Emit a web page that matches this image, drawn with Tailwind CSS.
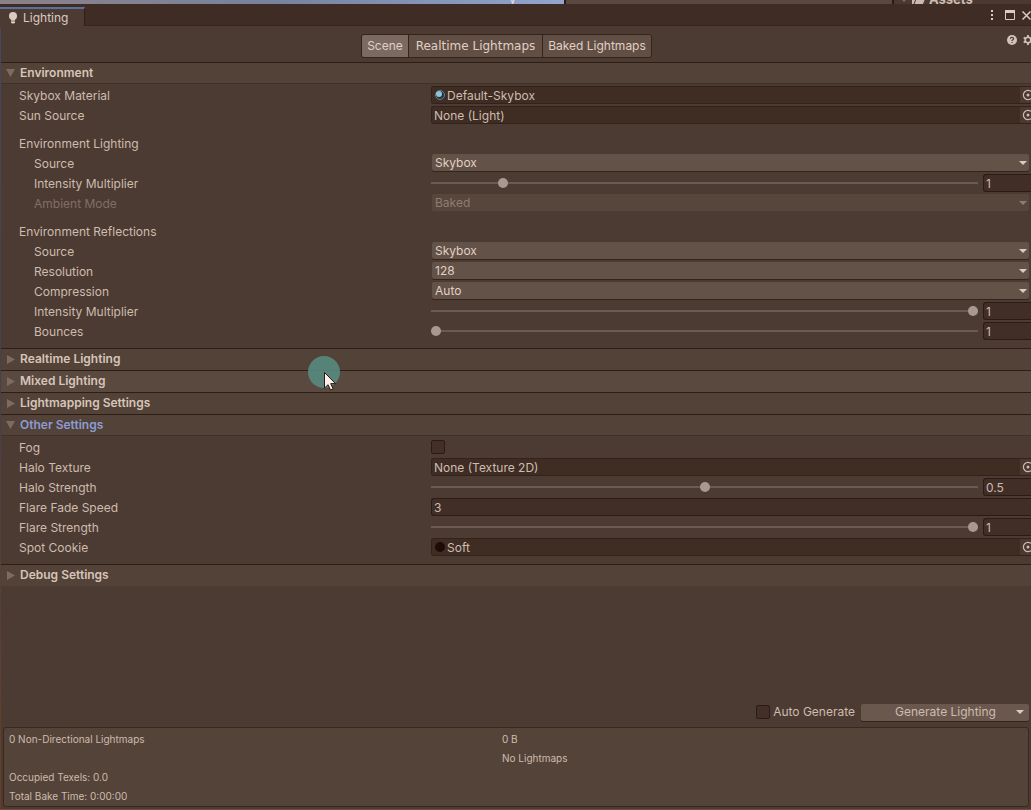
<!DOCTYPE html>
<html lang="en">
<head>
<meta charset="utf-8">
<meta name="viewport" content="width=device-width, initial-scale=1">
<title>Lighting</title>
<script src="https://cdn.jsdelivr.net/npm/@tailwindcss/browser@4"></script>
</head>
<body class="bg-[#4c3b32] text-[#cdbcb0] font-['Inter',sans-serif] text-xs">
<svg class="hidden">
  <symbol id="down" viewBox="0 0 8 4"><path d="M0 0h8L4 4z" fill="currentColor"/></symbol>
  <symbol id="open" viewBox="0 0 9 9"><path d="M0 0h9L4.500 8z" fill="currentColor"/></symbol>
  <symbol id="closed" viewBox="0 0 9 9"><path d="M1 0v9l8-4.500z" fill="currentColor"/></symbol>
  <symbol id="pick" viewBox="0 0 12 12"><circle cx="6" cy="6" r="4.600" fill="none" stroke="currentColor" stroke-width="1.200"/><circle cx="6" cy="6" r="1.500" fill="currentColor"/></symbol>
</svg>
<div class="relative flex min-h-screen flex-col overflow-hidden border-b border-[#6a5043]">

  <!-- Strip of the windows behind -->
  <div class="flex h-1 items-end overflow-hidden bg-[#57463c] leading-[10px]" aria-hidden="true">
    <div class="flex h-full w-[564px] items-end justify-end bg-linear-to-r from-[#8b8086] via-[#77839f] to-[#92a5cf] pr-12 text-[#e4dfe6]">y</div>
    <div class="h-full w-[328px] border-l-2 border-[#2a1a14] bg-[#594840]"></div>
    <div class="flex h-full flex-1 items-end gap-1 border-l-2 border-[#2a1a14] bg-[#4a3930] pl-[6px]">
      <svg class="size-2 text-[#7b695f]"><use href="#down"/></svg>
      <svg class="h-[9px] w-[13px]" viewBox="0 0 13 9"><path d="M0 0h12v4h1l-2 5H0z" fill="#cbbab0"/><path d="M2 9l2-5h8" fill="none" stroke="#4a3930"/></svg>
      <span class="text-[13px] font-bold">Assets</span>
    </div>
  </div>

  <!-- Tab bar -->
  <header class="flex h-[22px] items-end bg-[#3f2c24] shadow-[inset_0_-1px_#35231c]">
    <button class="flex h-[19px] w-[85px] items-center gap-[6px] border-t-2 border-r border-t-[#56719c] border-r-[#2f1f18] bg-[#4c3b32] pl-[9px] text-[#dccbc0]">
      <svg class="h-3 w-2" viewBox="0 0 8 12"><circle cx="4" cy="4" r="4" fill="#dccbc0"/><path d="M2 7h4v3.500l-1 1H3l-1-1z" fill="#dccbc0"/><path d="M2 9h4" stroke="#4c3b32" stroke-width=".6"/></svg>
      Lighting
    </button>
    <div class="ml-auto flex h-full items-center gap-3 text-[#dccbc0]">
      <button aria-label="Menu"><svg class="block h-[10px] w-[2px]" viewBox="0 0 2 10" fill="currentColor"><path d="M0 0h2v2H0zM0 4h2v2H0zM0 8h2v2H0z"/></svg></button>
      <button aria-label="Maximize"><svg class="block size-[10px]" viewBox="0 0 10 10"><path d="M.5.500h9v9h-9z" fill="none" stroke="currentColor"/><path d="M0 0h10v3H0z" fill="currentColor"/></svg></button>
      <button aria-label="Close" class="-ml-[5px]"><svg class="block h-[9px] w-[9px]" viewBox="0 0 9 9"><path d="M.5.500l8 8M8.500.500l-8 8" stroke="currentColor" stroke-width="1.500"/></svg></button>
    </div>
  </header>

  <!-- Mode toolbar -->
  <div class="grid h-9 grid-cols-[1fr_auto_1fr] items-start">
    <nav class="col-start-2 mr-[18px] mt-2 flex h-6 overflow-hidden rounded-[3px] border border-[#352319] text-[#e0cfc4]">
      <button class="w-[47px] border-r border-[#352319] bg-[#7b6a61]">Scene</button>
      <button class="w-[134px] border-r border-[#352319] bg-[#614f46] font-['DejaVu_Sans',sans-serif]">Realtime Lightmaps</button>
      <button class="w-[108px] bg-[#614f46]">Baked Lightmaps</button>
    </nav>
    <div class="flex justify-end gap-[6px] overflow-hidden pt-[9px] text-[#d3c2b7]">
      <button aria-label="Help"><svg class="block size-[10px]" viewBox="0 0 10 10"><circle cx="5" cy="5" r="5" fill="currentColor"/><path d="M3.400 3.800C3.400 1.800 6.600 1.800 6.600 3.700 6.600 4.800 5 4.800 5 6" fill="none" stroke="#4c3b32" stroke-width="1.200"/><path d="M4.400 6.900h1.200v1.200H4.400z" fill="#4c3b32"/></svg></button>
      <button aria-label="Settings" class="w-2 overflow-hidden"><svg class="block h-[10px] w-[10px]" viewBox="0 0 10 10"><circle cx="5" cy="5" r="2.800" fill="none" stroke="currentColor" stroke-width="1.600"/><path d="M5 0v2M5 8v2M.7 2.500l1.600 1M7.700 6.500l1.600 1M.7 7.500l1.600-1M7.700 3.500l1.600-1" stroke="currentColor" stroke-width="1.800"/></svg></button>
    </div>
  </div>

  <section>
    <h2><button aria-expanded="true" class="flex h-[22px] w-full items-center gap-[5px] border-y border-t-[#2e1d16] border-b-[#41302a] bg-[#534238] pl-[6px] text-[#d6c5ba] font-semibold"><svg class="size-[9px] text-[#7d6b61]"><use href="#open"/></svg>Environment</button></h2>
    <div class="flex flex-col gap-[2px] pt-[2px] pb-2">
      <div class="flex h-[18px]"><span class="flex w-[431px] shrink-0 items-center pt-[2px] pl-[19px]">Skybox Material</span>
        <div class="flex flex-1 items-center overflow-hidden rounded-l-[3px] border border-r-0 border-[#33221b] bg-[#3f2d24] pl-[3px]"><svg class="mr-[2px] size-[10px]" viewBox="0 0 10 10"><circle cx="5" cy="5" r="4.500" fill="#24343b" stroke="#6f7d80"/><circle cx="4" cy="4" r="3" fill="#8cc4dc"/></svg><span class="flex-1 pt-[2px]">Default-Skybox</span><button aria-label="Pick skybox material" class="flex h-full w-[11px] items-center overflow-hidden bg-[#4b3930]"><svg class="ml-[2px] size-3 shrink-0"><use href="#pick"/></svg></button></div></div>
      <div class="flex h-[18px]"><span class="flex w-[431px] shrink-0 items-center pt-[2px] pl-[19px]">Sun Source</span>
        <div class="flex flex-1 items-center overflow-hidden rounded-l-[3px] border border-r-0 border-[#33221b] bg-[#3f2d24] pl-[2px]"><span class="flex-1 pt-[2px]">None (Light)</span><button aria-label="Pick sun source" class="flex h-full w-[11px] items-center overflow-hidden bg-[#4b3930]"><svg class="ml-[2px] size-3 shrink-0"><use href="#pick"/></svg></button></div></div>

      <h3 class="mt-2 flex h-[18px] items-center pt-[2px] pl-[19px]">Environment Lighting</h3>
      <div class="flex h-[18px]"><label for="ls" class="flex w-[432px] shrink-0 items-center pt-[2px] pl-[34px]">Source</label>
        <div class="relative mr-[2px] flex-1"><select id="ls" class="block h-[17px] w-full appearance-none rounded-[2px] bg-[#635248] pl-[3px] text-[#e0cfc4] shadow-[0_1px_#35241c]"><option>Skybox</option></select><svg class="pointer-events-none absolute top-[7px] right-[2px] h-1 w-2 text-[#dccbc0]"><use href="#down"/></svg></div></div>
      <div class="flex h-[18px] items-center"><label for="li" class="w-[431px] shrink-0 pt-[2px] pl-[34px]">Intensity Multiplier</label>
        <input id="li" type="range" min="0" max="8" step="0.1" value="1" class="h-[10px] min-w-0 flex-1 appearance-none bg-[linear-gradient(to_bottom,transparent_40%,#6c5a50_40%,#6c5a50_60%,transparent_60%)] [&::-webkit-slider-thumb]:size-[10px] [&::-webkit-slider-thumb]:appearance-none [&::-webkit-slider-thumb]:rounded-full [&::-webkit-slider-thumb]:bg-[#a99890]">
        <input aria-label="Intensity value" value="1" class="ml-[5px] h-[18px] w-12 rounded-l-[3px] border border-r-0 border-[#2c1b15] bg-[#412e26] pl-[2px]"></div>
      <div class="flex h-[18px] text-[#806f65]"><label for="am" class="flex w-[432px] shrink-0 items-center pt-[2px] pl-[34px]">Ambient Mode</label>
        <div class="relative mr-[2px] flex-1"><select id="am" disabled class="block h-[17px] w-full appearance-none rounded-[2px] bg-[#57463c] pl-[3px] text-[#8e7d73] opacity-100"><option>Baked</option></select><svg class="pointer-events-none absolute top-[7px] right-[2px] h-1 w-2 text-[#8e7d73]"><use href="#down"/></svg></div></div>

      <h3 class="mt-2 flex h-[18px] items-center pt-[2px] pl-[19px]">Environment Reflections</h3>
      <div class="flex h-[18px]"><label for="rs" class="flex w-[432px] shrink-0 items-center pt-[2px] pl-[34px]">Source</label>
        <div class="relative mr-[2px] flex-1"><select id="rs" class="block h-[17px] w-full appearance-none rounded-[2px] bg-[#635248] pl-[3px] text-[#e0cfc4] shadow-[0_1px_#35241c]"><option>Skybox</option></select><svg class="pointer-events-none absolute top-[7px] right-[2px] h-1 w-2 text-[#dccbc0]"><use href="#down"/></svg></div></div>
      <div class="flex h-[18px]"><label for="rr" class="flex w-[432px] shrink-0 items-center pt-[2px] pl-[34px]">Resolution</label>
        <div class="relative mr-[2px] flex-1"><select id="rr" class="block h-[17px] w-full appearance-none rounded-[2px] bg-[#635248] pl-[3px] text-[#e0cfc4] shadow-[0_1px_#35241c]"><option>128</option></select><svg class="pointer-events-none absolute top-[7px] right-[2px] h-1 w-2 text-[#dccbc0]"><use href="#down"/></svg></div></div>
      <div class="flex h-[18px]"><label for="rc" class="flex w-[432px] shrink-0 items-center pt-[2px] pl-[34px]">Compression</label>
        <div class="relative mr-[2px] flex-1"><select id="rc" class="block h-[17px] w-full appearance-none rounded-[2px] bg-[#635248] pl-[3px] text-[#e0cfc4] shadow-[0_1px_#35241c]"><option>Auto</option></select><svg class="pointer-events-none absolute top-[7px] right-[2px] h-1 w-2 text-[#dccbc0]"><use href="#down"/></svg></div></div>
      <div class="flex h-[18px] items-center"><label for="ri" class="w-[431px] shrink-0 pt-[2px] pl-[34px]">Intensity Multiplier</label>
        <input id="ri" type="range" min="0" max="1" step="0.1" value="1" class="h-[10px] min-w-0 flex-1 appearance-none bg-[linear-gradient(to_bottom,transparent_40%,#6c5a50_40%,#6c5a50_60%,transparent_60%)] [&::-webkit-slider-thumb]:size-[10px] [&::-webkit-slider-thumb]:appearance-none [&::-webkit-slider-thumb]:rounded-full [&::-webkit-slider-thumb]:bg-[#a99890]">
        <input aria-label="Reflection intensity value" value="1" class="ml-[5px] h-[18px] w-12 rounded-l-[3px] border border-r-0 border-[#2c1b15] bg-[#412e26] pl-[2px]"></div>
      <div class="flex h-[18px] items-center"><label for="rb" class="w-[431px] shrink-0 pt-[2px] pl-[34px]">Bounces</label>
        <input id="rb" type="range" min="1" max="5" step="1" value="1" class="h-[10px] min-w-0 flex-1 appearance-none bg-[linear-gradient(to_bottom,transparent_40%,#6c5a50_40%,#6c5a50_60%,transparent_60%)] [&::-webkit-slider-thumb]:size-[10px] [&::-webkit-slider-thumb]:appearance-none [&::-webkit-slider-thumb]:rounded-full [&::-webkit-slider-thumb]:bg-[#a99890]">
        <input aria-label="Bounces value" value="1" class="ml-[5px] h-[18px] w-12 rounded-l-[3px] border border-r-0 border-[#2c1b15] bg-[#412e26] pl-[2px]"></div>
    </div>
  </section>

  <h2><button aria-expanded="false" class="flex h-[22px] w-full items-center gap-[5px] border-t border-[#2e1d16] bg-[#534238] pb-px pl-[6px] text-[#d6c5ba] font-semibold"><svg class="size-[9px] text-[#7d6b61]"><use href="#closed"/></svg>Realtime Lighting</button></h2>
  <h2><button aria-expanded="false" class="flex h-[22px] w-full items-center gap-[5px] border-t border-[#2e1d16] bg-[#5a493f] pb-px pl-[6px] text-[#d6c5ba] font-semibold"><svg class="size-[9px] text-[#7d6b61]"><use href="#closed"/></svg>Mixed Lighting</button></h2>
  <h2><button aria-expanded="false" class="flex h-[22px] w-full items-center gap-[5px] border-t border-[#2e1d16] bg-[#534238] pb-px pl-[6px] text-[#d6c5ba] font-semibold"><svg class="size-[9px] text-[#7d6b61]"><use href="#closed"/></svg>Lightmapping Settings</button></h2>

  <section>
    <h2><button aria-expanded="true" class="flex h-[22px] w-full items-center gap-[5px] border-y border-t-[#2e1d16] border-b-[#41302a] bg-[#534238] pl-[6px] font-semibold text-[#8b9bd3]"><svg class="size-[9px] text-[#7d6b61]"><use href="#open"/></svg>Other Settings</button></h2>
    <div class="flex flex-col gap-[2px] pt-[2px] pb-2">
      <div class="flex h-[18px]"><label for="fog" class="flex w-[431px] shrink-0 items-center pt-[2px] pl-[19px]">Fog</label><input id="fog" type="checkbox" class="mt-[2px] size-[14px] appearance-none rounded-[2px] border border-[#2c1b15] bg-[#432f27]"></div>
      <div class="flex h-[18px]"><span class="flex w-[431px] shrink-0 items-center pt-[2px] pl-[19px]">Halo Texture</span>
        <div class="flex flex-1 items-center overflow-hidden rounded-l-[3px] border border-r-0 border-[#33221b] bg-[#3f2d24] pl-[2px]"><span class="flex-1 pt-[2px]">None (Texture 2D)</span><button aria-label="Pick halo texture" class="flex h-full w-[11px] items-center overflow-hidden bg-[#4b3930]"><svg class="ml-[2px] size-3 shrink-0"><use href="#pick"/></svg></button></div></div>
      <div class="flex h-[18px] items-center"><label for="hs" class="w-[431px] shrink-0 pt-[2px] pl-[19px]">Halo Strength</label>
        <input id="hs" type="range" min="0" max="1" step="0.1" value="0.5" class="h-[10px] min-w-0 flex-1 appearance-none bg-[linear-gradient(to_bottom,transparent_40%,#6c5a50_40%,#6c5a50_60%,transparent_60%)] [&::-webkit-slider-thumb]:size-[10px] [&::-webkit-slider-thumb]:appearance-none [&::-webkit-slider-thumb]:rounded-full [&::-webkit-slider-thumb]:bg-[#a99890]">
        <input aria-label="Halo strength value" value="0.5" class="ml-[5px] h-[18px] w-12 rounded-l-[3px] border border-r-0 border-[#2c1b15] bg-[#412e26] pl-[2px]"></div>
      <div class="flex h-[18px] items-center"><label for="ff" class="w-[431px] shrink-0 pt-[2px] pl-[19px]">Flare Fade Speed</label>
        <input id="ff" value="3" class="h-[18px] min-w-0 flex-1 rounded-l-[3px] border border-r-0 border-[#2c1b15] bg-[#412e26] pl-[2px]"></div>
      <div class="flex h-[18px] items-center"><label for="fs" class="w-[431px] shrink-0 pt-[2px] pl-[19px]">Flare Strength</label>
        <input id="fs" type="range" min="0" max="1" step="0.1" value="1" class="h-[10px] min-w-0 flex-1 appearance-none bg-[linear-gradient(to_bottom,transparent_40%,#6c5a50_40%,#6c5a50_60%,transparent_60%)] [&::-webkit-slider-thumb]:size-[10px] [&::-webkit-slider-thumb]:appearance-none [&::-webkit-slider-thumb]:rounded-full [&::-webkit-slider-thumb]:bg-[#a99890]">
        <input aria-label="Flare strength value" value="1" class="ml-[5px] h-[18px] w-12 rounded-l-[3px] border border-r-0 border-[#2c1b15] bg-[#412e26] pl-[2px]"></div>
      <div class="flex h-[18px]"><span class="flex w-[431px] shrink-0 items-center pt-[2px] pl-[19px]">Spot Cookie</span>
        <div class="flex flex-1 items-center overflow-hidden rounded-l-[3px] border border-r-0 border-[#33221b] bg-[#3f2d24] pl-[3px]"><span class="mr-[2px] size-[10px] rounded-full bg-[#1d0b05]"></span><span class="flex-1 pt-[2px]">Soft</span><button aria-label="Pick spot cookie" class="flex h-full w-[11px] items-center overflow-hidden bg-[#4b3930]"><svg class="ml-[2px] size-3 shrink-0"><use href="#pick"/></svg></button></div></div>
    </div>
  </section>
  <h2><button aria-expanded="false" class="flex h-[22px] w-full items-center gap-[5px] border-t border-[#2e1d16] bg-[#534238] pb-px pl-[6px] text-[#d6c5ba] font-semibold"><svg class="size-[9px] text-[#7d6b61]"><use href="#closed"/></svg>Debug Settings</button></h2>

  <!-- Bake controls -->
  <div class="mt-auto mb-[6px] flex h-[18px] items-center justify-end pr-[2px]">
    <input id="auto" type="checkbox" class="size-[14px] appearance-none rounded-[2px] border border-[#2c1b15] bg-[#432f27]">
    <label for="auto" class="ml-[3px]">Auto Generate</label>
    <button class="ml-[6px] flex h-[17px] w-[168px] items-center rounded-[2px] bg-[#6a584e] pr-[5px] shadow-[0_1px_#35241c]"><span class="flex-1 pl-[14px]">Generate Lighting</span><svg class="h-1 w-2 text-[#dccbc0]"><use href="#down"/></svg></button>
  </div>

  <footer class="mr-[2px] mb-[2px] ml-[3px] grid h-20 grid-cols-[493px_1fr] grid-rows-[repeat(4,19px)] items-center rounded-[3px] border border-[#3a281f] bg-[#544338] pt-[2px] pl-[5px] text-[10px]">
    <span>0 Non-Directional Lightmaps</span><span>0 B</span>
    <span class="col-start-2">No Lightmaps</span>
    <span class="row-start-3">Occupied Texels: 0.0</span>
    <span class="row-start-4">Total Bake Time: 0:00:00</span>
  </footer>

  <div class="absolute top-7 bottom-0 left-0 w-px bg-linear-to-b from-[#46485c] via-[#47404a] to-[#6a3d22]"></div>
  <div class="absolute top-[356px] left-[308px] size-8 rounded-full bg-[#578a80]/90"></div>
  <svg class="absolute top-[371px] left-[323px] h-5 w-[14px]" viewBox="0 0 14 20"><path d="M1.500 1.500v15.500l3.600-3.300 2.400 5.300 2.600-1.100-2.400-5.300h4.800z" fill="#fff1e9" stroke="#2a1b15"/></svg>
</div>
</body>
</html>
